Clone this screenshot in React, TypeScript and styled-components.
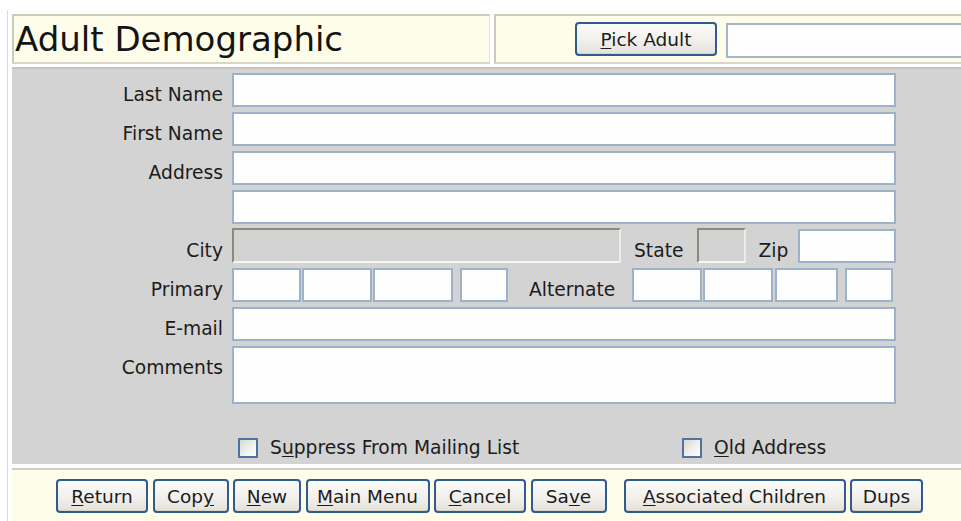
import React from "react";
import styled, { createGlobalStyle } from "styled-components";

const GlobalStyle = createGlobalStyle`
  html, body {
    margin: 0;
    padding: 0;
    background: #ffffff;
    overflow: hidden;
  }
  body {
    font-family: "DejaVu Sans", Verdana, sans-serif;
    color: #1c1c1c;
  }
`;

const Screen = styled.div`
  width: 961px;
  height: 521px;
  overflow: hidden;
  box-sizing: border-box;
  padding: 10px 0 0 7px;
  background: #fff;
`;

const Frame = styled.div`
  height: 100%;
  width: 1000px;
  box-sizing: border-box;
  border-left: 1px solid #dedcd2;
  padding: 4px 0 0 4px;
  display: flex;
  flex-direction: column;
`;

const Header = styled.div`
  display: flex;
  gap: 4px;
  height: 50px;
`;

const CreamPanel = styled.div`
  background: #fefde9;
  box-sizing: border-box;
  border-top: 2px solid #cdcabb;
  border-left: 2px solid #cdcabb;
  border-right: 1px solid #e8e6d8;
  border-bottom: 2px solid #d8d6c8;
`;

const TitlePanel = styled(CreamPanel)`
  width: 478px;
  display: flex;
  align-items: center;
  padding-left: 1px;
`;

const Title = styled.h1`
  margin: 0;
  font-weight: normal;
  font-size: 34px;
  line-height: 1;
  color: #141414;
`;

const PickPanel = styled(CreamPanel)`
  flex: 1;
  display: flex;
  align-items: center;
  padding-left: 79px;
  gap: 9px;
`;

const Button = styled.button<{ $w: number }>`
  width: ${(p) => p.$w}px;
  height: 34px;
  box-sizing: border-box;
  padding: 0;
  border: 2px solid #2f5c8c;
  border-radius: 4px;
  background: linear-gradient(#fbfbf9 0%, #f1f0ec 55%, #e3e1da 100%);
  font-family: "DejaVu Sans", Verdana, sans-serif;
  font-size: 18.5px;
  color: #1c1c1c;
  display: flex;
  align-items: center;
  justify-content: center;
  box-shadow: inset 0 -1px 0 #d6d2c6;
`;

const Key = styled.span`
  text-decoration: underline;
  text-underline-offset: 2px;
`;

const SearchBox = styled.input`
  flex: 1;
  height: 35px;
  box-sizing: border-box;
  margin-top: 2px;
  border: 2px solid #a3b6cc;
  background: #fefefe;
`;

const FormPanel = styled.div`
  margin-top: 3px;
  height: 397px;
  box-sizing: border-box;
  background: #d3d3d3;
  border-top: 2px solid #c6c4bc;
  padding-top: 4px;
  display: flex;
  flex-direction: column;
  gap: 5px;
`;

/* a form line: label column, then fields up to the right edge at x=895 */
const Row = styled.div`
  display: flex;
  align-items: flex-start;
  width: 884px;
  height: 34px;
`;

const TallRow = styled(Row)`
  height: 58px;
`;

const Label = styled.label`
  width: 211px;
  flex: none;
  padding-right: 9px;
  text-align: right;
  font-size: 18.7px;
  line-height: 34px;
  padding-top: 5px;
  box-sizing: content-box;
  white-space: nowrap;
`;

const InlineLabel = styled.span<{ $ml: number; $mr: number }>`
  margin-left: ${(p) => p.$ml}px;
  margin-right: ${(p) => p.$mr}px;
  font-size: 18.7px;
  line-height: 34px;
  padding-top: 5px;
  white-space: nowrap;
`;

const TextBox = styled.input<{ $w?: number; $ml?: number }>`
  ${(p) => (p.$w ? `width: ${p.$w}px; flex: none;` : "flex: 1; min-width: 0;")}
  margin-left: ${(p) => p.$ml ?? 0}px;
  height: 34px;
  box-sizing: border-box;
  border: 2px solid #9cb2cb;
  background: #fefefe;
  padding: 0 4px;
  font-size: 16px;
  outline: none;
`;

const SunkenBox = styled.input<{ $w: number }>`
  width: ${(p) => p.$w}px;
  flex: none;
  height: 35px;
  margin-top: -1px;
  box-sizing: border-box;
  border-style: solid;
  border-width: 2px;
  border-color: #8c8a7c #ecebe4 #f6f6f2 #8c8a7c;
  background: #d3d3d3;
  outline: none;
`;

const Memo = styled.textarea`
  flex: 1;
  height: 58px;
  box-sizing: border-box;
  border: 2px solid #9cb2cb;
  background: #fefefe;
  resize: none;
  outline: none;
`;

const Gap = styled.div`
  height: 23px;
`;

const CheckRow = styled.div`
  display: flex;
  align-items: center;
  height: 21px;
  padding-left: 226px;
`;

const CheckItem = styled.label<{ $w?: number }>`
  display: flex;
  align-items: center;
  gap: 12px;
  width: ${(p) => (p.$w ? `${p.$w}px` : "auto")};
  font-size: 18.7px;
  white-space: nowrap;
`;

const Box = styled.span`
  width: 20px;
  height: 20px;
  box-sizing: border-box;
  border: 2px solid #4f73a0;
  background: linear-gradient(135deg, #d9d9d3 0%, #f2f2ee 60%, #ffffff 100%);
  flex: none;
`;

const Footer = styled.div`
  margin-top: 4px;
  flex: 1;
  background: #fefde9;
  border-top: 2px solid #d2cfc2;
  padding: 9px 0 0 44px;
  display: flex;
  align-items: flex-start;
`;

const ButtonGroup = styled.div<{ $ml?: number }>`
  display: flex;
  gap: 4.5px;
  margin-left: ${(p) => p.$ml ?? 0}px;
`;

type Phone = { w?: number; gap: number };

const primary: Phone[] = [
  { w: 69, gap: 0 },
  { w: 70, gap: 1 },
  { w: 80, gap: 1 },
  { w: 48, gap: 7 },
];

const alternate: Phone[] = [
  { w: 70, gap: 0 },
  { w: 70, gap: 1 },
  { w: 63, gap: 2 },
  { w: 48, gap: 7 },
];

function PhoneBoxes({ parts }: { parts: Phone[] }) {
  return (
    <>
      {parts.map((p, i) => (
        <TextBox key={i} $w={p.w} $ml={p.gap} />
      ))}
    </>
  );
}

export default function App() {
  return (
    <>
      <GlobalStyle />
      <Screen>
        <Frame>
          <Header>
            <TitlePanel>
              <Title>Adult Demographic</Title>
            </TitlePanel>
            <PickPanel>
              <Button $w={142}>
                <span>
                  <Key>P</Key>ick Adult
                </span>
              </Button>
              <SearchBox />
            </PickPanel>
          </Header>

          <FormPanel>
            <Row>
              <Label>Last Name</Label>
              <TextBox />
            </Row>
            <Row>
              <Label>First Name</Label>
              <TextBox />
            </Row>
            <Row>
              <Label>Address</Label>
              <TextBox />
            </Row>
            <Row>
              <Label />
              <TextBox />
            </Row>
            <Row>
              <Label>City</Label>
              <SunkenBox $w={389} />
              <InlineLabel $ml={13} $mr={14}>State</InlineLabel>
              <SunkenBox $w={49} />
              <InlineLabel $ml={12} $mr={10}>Zip</InlineLabel>
              <TextBox />
            </Row>
            <Row>
              <Label>Primary</Label>
              <PhoneBoxes parts={primary} />
              <InlineLabel $ml={21} $mr={17}>Alternate</InlineLabel>
              <PhoneBoxes parts={alternate} />
            </Row>
            <Row>
              <Label>E-mail</Label>
              <TextBox />
            </Row>
            <TallRow>
              <Label>Comments</Label>
              <Memo />
            </TallRow>
            <Gap />
            <CheckRow>
              <CheckItem $w={444}>
                <Box />
                <span>
                  S<Key>u</Key>ppress From Mailing List
                </span>
              </CheckItem>
              <CheckItem>
                <Box />
                <span>
                  <Key>O</Key>ld Address
                </span>
              </CheckItem>
            </CheckRow>
          </FormPanel>

          <Footer>
            <ButtonGroup>
              <Button $w={92}>
                <span><Key>R</Key>eturn</span>
              </Button>
              <Button $w={76}>
                <span>Cop<Key>y</Key></span>
              </Button>
              <Button $w={68}>
                <span><Key>N</Key>ew</span>
              </Button>
              <Button $w={124}>
                <span><Key>M</Key>ain Menu</span>
              </Button>
              <Button $w={92}>
                <span><Key>C</Key>ancel</span>
              </Button>
              <Button $w={76}>
                <span>Sa<Key>v</Key>e</span>
              </Button>
            </ButtonGroup>
            <ButtonGroup $ml={17}>
              <Button $w={222}>
                <span><Key>A</Key>ssociated Children</span>
              </Button>
              <Button $w={73}>
                <span>Dups</span>
              </Button>
            </ButtonGroup>
          </Footer>
        </Frame>
      </Screen>
    </>
  );
}
